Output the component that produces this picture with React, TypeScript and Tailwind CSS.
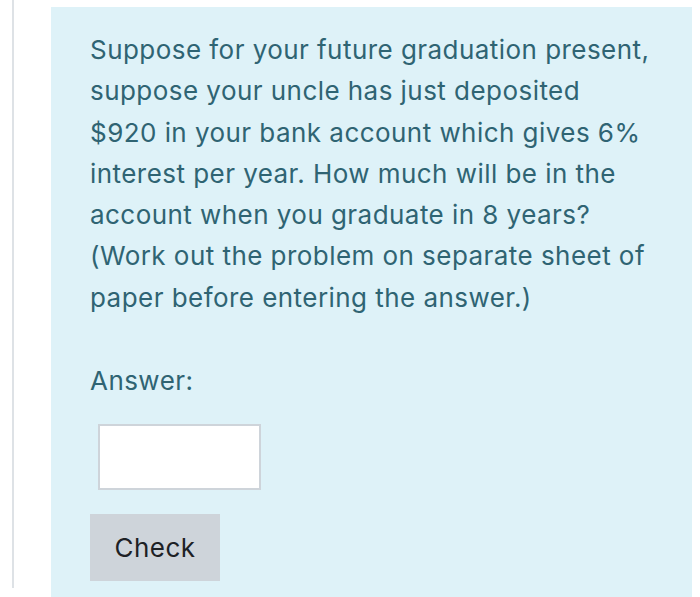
export default function App() {
  return (
    <div className="h-[597px] w-[700px] overflow-hidden bg-white font-['Inter',sans-serif]">
      <div className="ml-3 flex h-[588px] border-l-2 border-[#dee2e6] pl-[37px] pt-[7px]">
        <div className="h-[590px] w-[641px] bg-[#def2f8] pl-[39px] pr-[20px] pt-[22px] text-[#2f6473]">
          <p className="whitespace-nowrap text-[26px] leading-[41.3px] tracking-[0.45px]">
            Suppose for your future graduation present,
            <br />
            suppose your uncle has just deposited
            <br />
            $920 in your bank account which gives 6%
            <br />
            interest per year. How much will be in the
            <br />
            account when you graduate in 8 years?
            <br />
            (Work out the problem on separate sheet of
            <br />
            paper before entering the answer.)
          </p>
          <p className="mt-[42px] text-[26px] leading-[41.3px] tracking-[0.45px]">Answer:</p>
          <input
            type="text"
            className="ml-2 mt-[23px] block h-[66px] w-[163px] border-2 border-[#ced4da] bg-white"
          />
          <button className="mt-6 h-[67px] w-[130px] bg-[#ced4da] text-[26px] tracking-[0.45px] text-[#1d2125]">
            Check
          </button>
        </div>
      </div>
    </div>
  );
}
